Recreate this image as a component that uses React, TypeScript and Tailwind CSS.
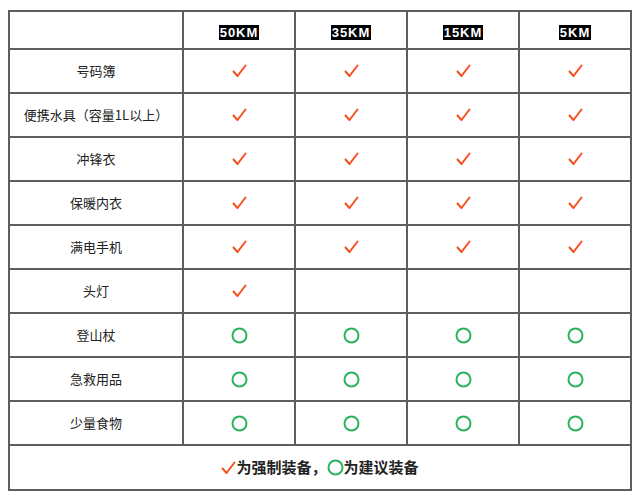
const distances = ["50KM", "35KM", "15KM", "5KM"];

type Mark = "check" | "circle" | null;

const rows: { name: string; marks: Mark[] }[] = [
  { name: "号码簿", marks: ["check", "check", "check", "check"] },
  { name: "便携水具（容量1L以上）", marks: ["check", "check", "check", "check"] },
  { name: "冲锋衣", marks: ["check", "check", "check", "check"] },
  { name: "保暖内衣", marks: ["check", "check", "check", "check"] },
  { name: "满电手机", marks: ["check", "check", "check", "check"] },
  { name: "头灯", marks: ["check", null, null, null] },
  { name: "登山杖", marks: ["circle", "circle", "circle", "circle"] },
  { name: "急救用品", marks: ["circle", "circle", "circle", "circle"] },
  { name: "少量食物", marks: ["circle", "circle", "circle", "circle"] },
];

const Check = () => (
  <svg width="15" height="14" viewBox="0 0 15 14" className="inline-block">
    <path d="M1.5 7.5 L5.5 12 L13.5 1.5" fill="none" stroke="#f4511e" strokeWidth="2" strokeLinecap="round" strokeLinejoin="round" />
  </svg>
);

const Circle = () => (
  <svg width="17" height="17" viewBox="0 0 17 17" className="inline-block">
    <circle cx="8.5" cy="8.5" r="7" fill="none" stroke="#2bb35d" strokeWidth="2" />
  </svg>
);

const cell = "border-2 border-[#5e5e5e] text-center align-middle";

export default function App() {
  return (
    <div className="h-[503px] w-[640px] bg-white pl-[8px] pt-[10px] font-['Noto_Sans_CJK_SC','Liberation_Sans',sans-serif] text-[#222]">
      <table className="w-[624px] table-fixed border-collapse">
        <colgroup>
          <col className="w-[174px]" />
          <col className="w-[112px]" />
          <col className="w-[112px]" />
          <col className="w-[112px]" />
          <col className="w-[112px]" />
        </colgroup>
        <thead>
          <tr className="h-[38px]">
            <th className={cell}></th>
            {distances.map((d) => (
              <th key={d} className={cell}>
                <span className="bg-black px-[1px] font-['Liberation_Sans',sans-serif] text-[13px] font-bold leading-[14px] tracking-[1px] text-white">
                  {d}
                </span>
              </th>
            ))}
          </tr>
        </thead>
        <tbody>
          {rows.map((r) => (
            <tr key={r.name} className="h-[44px]">
              <td className={`${cell} text-[13px]`}>{r.name}</td>
              {r.marks.map((m, i) => (
                <td key={i} className={cell}>
                  <div className="flex items-center justify-center">
                    {m === "check" && <Check />}
                    {m === "circle" && <Circle />}
                  </div>
                </td>
              ))}
            </tr>
          ))}
          <tr className="h-[45px]">
            <td colSpan={5} className={cell}>
              <div className="flex items-center justify-center text-[15px] font-bold">
                <Check />
                <span>为强制装备，</span>
                <span className="flex"><Circle /></span>
                <span>为建议装备</span>
              </div>
            </td>
          </tr>
        </tbody>
      </table>
    </div>
  );
}
